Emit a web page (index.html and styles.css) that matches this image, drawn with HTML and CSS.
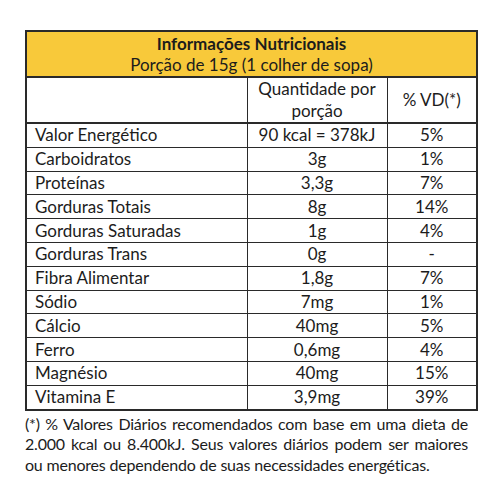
FILE: index.html
```html
<!DOCTYPE html>
<html lang="pt">
<head>
<meta charset="utf-8">
<link rel="stylesheet" href="styles.css">
</head>
<body>
<div class="page">
  <table class="nutri">
    <colgroup>
      <col class="c1"><col class="c2"><col class="c3">
    </colgroup>
    <thead>
      <tr class="title-row">
        <th colspan="3">
          <div class="title">Informações Nutricionais</div>
          <div class="subtitle">Porção de 15g (1 colher de sopa)</div>
        </th>
      </tr>
      <tr class="head-row">
        <th></th>
        <th>Quantidade por<br>porção</th>
        <th>% VD(*)</th>
      </tr>
    </thead>
    <tbody>
      <tr><td>Valor Energético</td><td>90 kcal = 378kJ</td><td>5%</td></tr>
      <tr><td>Carboidratos</td><td>3g</td><td>1%</td></tr>
      <tr><td>Proteínas</td><td>3,3g</td><td>7%</td></tr>
      <tr><td>Gorduras Totais</td><td>8g</td><td>14%</td></tr>
      <tr><td>Gorduras Saturadas</td><td>1g</td><td>4%</td></tr>
      <tr><td>Gorduras Trans</td><td>0g</td><td>-</td></tr>
      <tr><td>Fibra Alimentar</td><td>1,8g</td><td>7%</td></tr>
      <tr><td>Sódio</td><td>7mg</td><td>1%</td></tr>
      <tr><td>Cálcio</td><td>40mg</td><td>5%</td></tr>
      <tr><td>Ferro</td><td>0,6mg</td><td>4%</td></tr>
      <tr><td>Magnésio</td><td>40mg</td><td>15%</td></tr>
      <tr><td>Vitamina E</td><td>3,9mg</td><td>39%</td></tr>
    </tbody>
  </table>
  <div class="note">
    <span class="note-line full">(*) % Valores Diários recomendados com base em uma dieta de</span>
    <span class="note-line full">2.000 kcal ou 8.400kJ. Seus valores diários podem ser maiores</span>
    <span class="note-line">ou menores dependendo de suas necessidades energéticas.</span>
  </div>
</div>
</body>
</html>
```

FILE: styles.css
```css
html, body {
  margin: 0;
  padding: 0;
  background: #ffffff;
}

body {
  font-family: "Lato", "Liberation Sans", sans-serif;
  color: #1c1c1c;
  font-size: 17px;
}

.page {
  padding: 30px 0 0 25px;
  width: 451px;
}

.nutri {
  border-collapse: collapse;
  width: 451px;
  table-layout: fixed;
  border: 2px solid #2a2a2a;
}

.c1 { width: 221px; }
.c2 { width: 140px; }
.c3 { width: 90px; }

.nutri th,
.nutri td {
  border: 1px solid #2a2a2a;
  padding: 0;
  font-weight: normal;
}

.title-row th {
  background: #f8c93a;
  height: 44px;
  text-align: center;
  line-height: 21px;
  border-bottom: 2px solid #2a2a2a;
}

.title {
  font-weight: bold;
}

.head-row th {
  height: 43px;
  text-align: center;
  line-height: 22px;
  border-bottom: 2px solid #2a2a2a;
}

.nutri td {
  height: 22.8px;
  line-height: 20px;
  text-align: center;
}

.nutri td:first-child {
  text-align: left;
  padding-left: 8px;
}

.note {
  margin-top: 3px;
  width: 443px;
  font-size: 16px;
  line-height: 20.5px;
  letter-spacing: -0.2px;
}

.note-line {
  display: block;
  white-space: nowrap;
}

.note-line.full {
  white-space: normal;
  text-align: justify;
  text-align-last: justify;
}
```
